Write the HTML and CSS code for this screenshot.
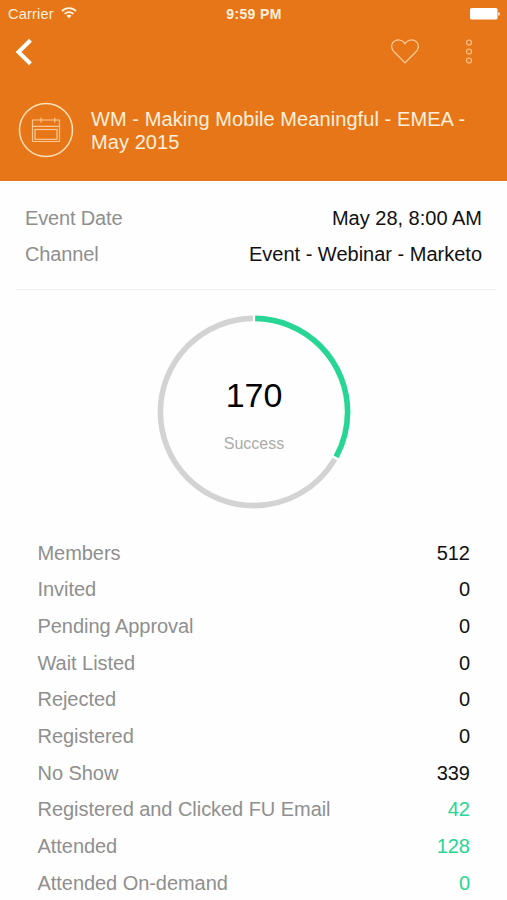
FILE: index.html
```html
<!DOCTYPE html>
<html lang="en">
<head>
    <meta charset="UTF-8">
    <meta name="viewport" content="width=device-width, initial-scale=1.0">
    <title>Event Details</title>
    <link rel="stylesheet" href="styles.css">
</head>
<body>
    <div class="screen">
        <header class="header">
            <div class="status-bar">
                <div class="carrier">
                    <span>Carrier</span>
                    <svg class="wifi" width="16" height="12" viewBox="0 0 16 12" fill="none" stroke="#fff3df" stroke-width="1.7">
                        <path d="M1 4.2C4.900 .2 11.100 .2 15 4.200"/>
                        <path d="M3.500 6.900C6 4.500 10 4.500 12.500 6.900"/>
                        <path d="M8 11.200L5.500 8.700C6.900 7.400 9.100 7.400 10.500 8.700Z" fill="#fff3df" stroke="none"/>
                    </svg>
                </div>
                <span class="time">9:59 PM</span>
                <svg class="battery" width="30" height="12" viewBox="0 0 30 12" fill="#fff">
                    <rect x="0" y="0" width="27.500" height="11.500" rx="1.500"/>
                    <path d="M28.300 4C30.300 4.500 30.300 7.300 28.300 7.800Z"/>
                </svg>
            </div>

            <div class="nav-bar">
                <svg class="back" width="18" height="28" viewBox="0 0 18 28" fill="none" stroke="#fff" stroke-width="4">
                    <path d="M15.500 2.200L3.500 14L15.500 25.800"/>
                </svg>
                <div class="actions">
                    <svg width="30" height="26" viewBox="0 0 30 26" fill="none" stroke="#ffd0a0" stroke-width="1.200">
                        <path d="M15 23.800L4.500 13.300C1.200 10.300 .8 6 3 3.400C6.200 -.2 12.300 .1 15 4.800C17.700 .1 23.800 -.2 27 3.400C29.200 6 28.800 10.300 25.500 13.300Z"/>
                    </svg>
                    <svg width="8" height="26" viewBox="0 0 8 26" fill="none" stroke="#ffc48c" stroke-width="1.200">
                        <circle cx="4" cy="3.500" r="2.500"/>
                        <circle cx="4" cy="12.500" r="2.500"/>
                        <circle cx="4" cy="21.500" r="2.500"/>
                    </svg>
                </div>
            </div>

            <div class="event-title">
                <svg width="56" height="56" viewBox="0 0 56 56" fill="none" stroke="#ffe0b8">
                    <circle cx="28" cy="28" r="26.500" stroke-width="1.500"/>
                    <g stroke="#ffc993" stroke-width="1.200">
                        <rect x="14.500" y="18" width="27" height="21.500" rx=".5"/>
                        <path d="M14.500 24.300H41.500M23 15.700V20.500M36.800 15.700V20.500"/>
                        <rect x="17" y="27.500" width="22" height="9.800"/>
                    </g>
                </svg>
                <h1>WM - Making Mobile Meaningful - EMEA - May 2015</h1>
            </div>
        </header>

        <div class="event-info">
            <div class="row">
                <span class="label">Event Date</span>
                <span>May 28, 8:00 AM</span>
            </div>
            <div class="row">
                <span class="label">Channel</span>
                <span>Event - Webinar - Marketo</span>
            </div>
        </div>

        <div class="chart">
            <svg class="ring" width="194" height="194" viewBox="0 0 194 194" fill="none" stroke-width="5.600">
                <g transform="rotate(-90 97 97)">
                    <circle cx="97" cy="97" r="93.600" stroke="#d3d3d3" pathLength="360" stroke-dasharray="239 121" stroke-dashoffset="-120.300"/>
                    <circle cx="97" cy="97" r="93.600" stroke="#27d695" pathLength="360" stroke-dasharray="118 242" stroke-dashoffset="-.7"/>
                </g>
            </svg>
            <div class="chart-text">
                <span class="chart-value">170</span>
                <span class="chart-label">Success</span>
            </div>
        </div>

        <div class="stats">
            <div class="row"><span class="label">Members</span><span>512</span></div>
            <div class="row"><span class="label">Invited</span><span>0</span></div>
            <div class="row"><span class="label">Pending Approval</span><span>0</span></div>
            <div class="row"><span class="label">Wait Listed</span><span>0</span></div>
            <div class="row"><span class="label">Rejected</span><span>0</span></div>
            <div class="row"><span class="label">Registered</span><span>0</span></div>
            <div class="row"><span class="label">No Show</span><span>339</span></div>
            <div class="row success"><span class="label">Registered and Clicked FU Email</span><span>42</span></div>
            <div class="row success"><span class="label">Attended</span><span>128</span></div>
            <div class="row success"><span class="label">Attended On-demand</span><span>0</span></div>
        </div>
    </div>
</body>
</html>
```

FILE: styles.css
```css
* {
    margin: 0;
    padding: 0;
    box-sizing: border-box;
}

body {
    font-family: "Liberation Sans", Arial, sans-serif;
    font-size: 20px;
    color: #111;
    background-color: #fefefe;
}

svg {
    display: block;
    flex-shrink: 0;
}

.screen {
    width: 100%;
    height: 900px;
    overflow: hidden;
}

.header {
    height: 181px;
    background-color: #e77619;
    color: #fff0dc;
}

.status-bar {
    display: grid;
    grid-template-columns: 1fr auto 1fr;
    align-items: center;
    height: 28px;
    padding: 0 7px 0 8px;
    font-size: 14.5px;
}

.carrier {
    display: flex;
    align-items: center;
    gap: 7px;
    letter-spacing: 0.2px;
}

.wifi {
    margin-bottom: 2px;
}

.time {
    font-weight: bold;
    font-size: 14px;
    letter-spacing: 0.35px;
}

.battery {
    justify-self: end;
}

.nav-bar {
    display: flex;
    justify-content: space-between;
    align-items: center;
    height: 47px;
    padding: 0 34px 0 15px;
}

.actions {
    display: flex;
    gap: 45px;
}

.event-title {
    display: flex;
    gap: 17px;
    padding: 27px 20px 0 18px;
}

.event-title h1 {
    font-size: 20px;
    font-weight: normal;
    line-height: 23px;
    letter-spacing: 0.08px;
    padding-top: 6px;
}

.row {
    display: flex;
    justify-content: space-between;
    align-items: center;
}

.label {
    color: #8f8f8f;
}

.event-info {
    height: 109px;
    margin: 0 11px 0 16px;
    padding: 19px 14px 0 9px;
    border-bottom: 1px solid #f0f0f0;
}

.event-info .row {
    height: 36px;
}

.event-info .label {
    letter-spacing: -0.15px;
}

.chart {
    display: grid;
    justify-items: center;
    padding: 25px 0 0 1px;
}

.ring,
.chart-text {
    grid-area: 1 / 1;
}

.chart-text {
    display: flex;
    flex-direction: column;
    align-items: center;
    padding-top: 60px;
}

.chart-value {
    font-size: 34px;
    line-height: 40px;
    color: #000;
}

.chart-label {
    font-size: 16px;
    line-height: 20px;
    margin-top: 19px;
    color: #ababab;
}

.stats {
    padding: 26px 37px 0;
}

.stats .row {
    height: 36.670px;
}

.stats .label {
    letter-spacing: -0.05px;
    padding-left: 0.500px;
}

.success {
    color: #27d695;
}
```
